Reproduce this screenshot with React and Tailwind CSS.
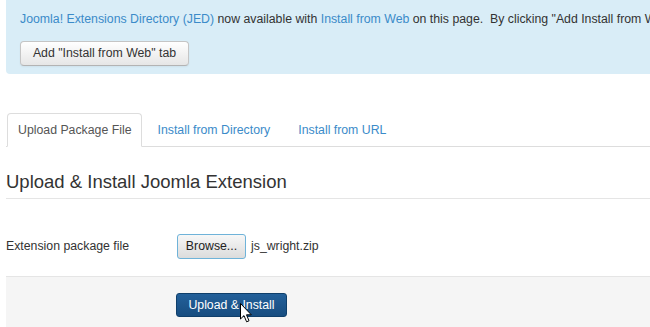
import React from "react";

export default function App() {
  return (
    <div className="w-[650px] h-[327px] overflow-hidden bg-white pl-[6px] font-['Liberation_Sans',Arial,sans-serif] text-[12.3px] text-[#333]">
      {/* Alert */}
      <div className="h-[74px] bg-[#d9edf7] rounded-bl-[4px] pl-[14px] pt-[12px] whitespace-nowrap overflow-hidden">
        <p className="leading-[14px]">
          <span className="text-[#3b8bc9]">Joomla! Extensions Directory (JED)</span> now available with{" "}
          <span className="text-[#3b8bc9]">Install from Web</span> on this page.&nbsp; By clicking "Add Install from Web" tab
        </p>
        <button className="mt-[15px] h-[25px] w-[169px] rounded-[4px] border border-[#c5c5c5] border-b-[#b3b3b3] bg-gradient-to-b from-white to-[#e6e6e6] text-[12.3px] text-[#333] shadow-[0_1px_2px_rgba(0,0,0,0.05)]">
          Add "Install from Web" tab
        </button>
      </div>

      {/* Tabs */}
      <div className="mt-[39px] flex border-b border-[#ddd] h-[34px]">
        <div className="ml-[1px] h-[34px] leading-[32px] px-[10px] border border-[#ddd] border-b-white rounded-t-[4px] bg-white text-[#555] mr-[2px]">
          Upload Package File
        </div>
        <div className="h-[34px] leading-[32px] px-[12px] border border-transparent text-[#3b8bc9] mr-[2px]">
          Install from Directory
        </div>
        <div className="h-[34px] leading-[32px] px-[12px] border border-transparent text-[#3b8bc9]">
          Install from URL
        </div>
      </div>

      {/* Heading */}
      <h2 className="mt-[24px] text-[18.5px] leading-[22px] pb-[5px] border-b border-[#e5e5e5] text-[#333]">
        Upload &amp; Install Joomla Extension
      </h2>

      {/* Field row */}
      <div className="mt-[35px] flex items-center h-[25px]">
        <label className="w-[171px] text-[#333]">Extension package file</label>
        <button className="h-[25px] w-[69px] rounded-[3px] border border-[#6fb3d9] bg-gradient-to-b from-[#f7f7f7] to-[#dcdcdc] text-[12.3px] text-[#222]">
          Browse...
        </button>
        <span className="ml-[5px] text-[#333]">js_wright.zip</span>
      </div>

      {/* Form actions */}
      <div className="mt-[17px] h-[60px] border-t border-[#e5e5e5] bg-[#f5f5f5] pl-[170px] pt-[16px]">
        <div className="relative w-[111px]">
          <button className="h-[24px] w-[111px] rounded-[3px] border border-[#0f3f6b] bg-gradient-to-b from-[#23609a] to-[#174d80] text-[12.3px] text-white">
            Upload &amp; Install
          </button>
          <svg
            className="absolute left-[64px] top-[10px]"
            width="13"
            height="20"
            viewBox="0 0 13 20"
          >
            <path
              d="M0.5 0.5 L0.5 16 L4 12.6 L6.6 18.8 L9 17.8 L6.5 11.8 L11.3 11.8 Z"
              fill="white"
              stroke="black"
              strokeWidth="1"
              strokeLinejoin="miter"
            />
          </svg>
        </div>
      </div>
    </div>
  );
}
